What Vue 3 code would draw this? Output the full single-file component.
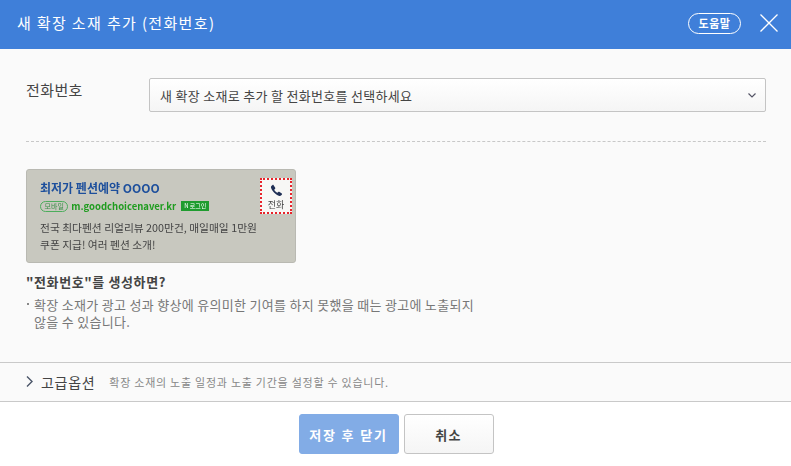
<script setup>
const title = '새 확장 소재 추가 (전화번호)'
</script>

<template>
  <div class="modal">
    <header class="head">
      <h1 class="title">{{ title }}</h1>
      <span class="help">도움말</span>
      <svg class="close" width="18" height="18" viewBox="0 0 18 18"><path d="M0.5 0.5L17.5 17.5M17.5 0.5L0.5 17.500" stroke="#fff" stroke-width="1.3" fill="none"/></svg>
    </header>
    <main class="body">
      <div class="row">
        <label class="label">전화번호</label>
        <div class="select">
          <span>새 확장 소재로 추가 할 전화번호를 선택하세요</span>
          <svg width="8" height="5" viewBox="0 0 8 5"><path d="M0.5 0.5L4 4L7.5 0.5" stroke="#556" stroke-width="1.2" fill="none"/></svg>
        </div>
      </div>
      <div class="dash"></div>
      <div class="ad">
        <div class="ad-main">
          <div class="ad-title">최저가 펜션예약 OOOO</div>
          <div class="ad-url">
            <span class="pill">모바일</span>
            <span class="url">m.goodchoicenaver.kr</span>
            <span class="login">N 로그인</span>
          </div>
          <div class="ad-desc">전국 최다펜션 리얼리뷰 200만건, 매일매일 1만원<br>쿠폰 지급! 여러 펜션 소개!</div>
        </div>
        <div class="call">
          <svg width="13" height="13" viewBox="0 0 24 24"><path fill="#1f2f55" d="M6.6 2.2l3 4.8c.4.6.3 1.300-.2 1.800L7.800 10.400c1 2.300 3.500 4.800 5.800 5.800l1.600-1.600c.5-.5 1.200-.6 1.800-.2l4.800 3c.7.400.8 1.300.3 1.900l-1.800 2.100c-.7.800-1.800 1.100-2.800.8C10.700 20.200 3.800 13.300 1.800 6.500c-.3-1 0-2.100.8-2.800l2.100-1.800c.6-.5 1.500-.4 1.900.3z"/></svg>
          <span>전화</span>
        </div>
      </div>
      <h2 class="q">"전화번호"를 생성하면?</h2>
      <ul class="notes">
        <li>확장 소재가 광고 성과 향상에 유의미한 기여를 하지 못했을 때는 광고에 노출되지 않을 수 있습니다.</li>
      </ul>
    </main>
    <section class="adv">
      <svg width="7" height="11" viewBox="0 0 7 11"><path d="M1 0.5L6 5.500L1 10.500" stroke="#4a5568" stroke-width="1.4" fill="none"/></svg>
      <span class="adv-label">고급옵션</span>
      <span class="adv-text">확장 소재의 노출 일정과 노출 기간을 설정할 수 있습니다.</span>
    </section>
    <footer class="foot">
      <button class="btn primary">저장 후 닫기</button>
      <button class="btn">취소</button>
    </footer>
  </div>
</template>

<style>
html, body { margin: 0; background: #fff; }
</style>

<style scoped>
.modal {
  width: 791px;
  height: 466px;
  overflow: hidden;
  display: flex;
  flex-direction: column;
  font-family: "Noto Sans CJK KR", "Noto Sans", sans-serif;
  color: #444;
  background: #fff;
}
.head {
  height: 49px;
  flex: none;
  box-sizing: border-box;
  background: #3f7fd9;
  display: flex;
  align-items: center;
  padding: 0 13px 3px 17px;
  color: #fff;
}
.title {
  margin: 0;
  flex: 1;
  font-size: 15px;
  font-weight: 400;
  letter-spacing: 1.35px;
  line-height: 24px;
}
.help {
  width: 53px;
  height: 21px;
  box-sizing: border-box;
  border: 1px solid #fff;
  border-radius: 11px;
  font-size: 11px;
  font-weight: 700;
  letter-spacing: 0.5px;
  line-height: 18px;
  text-align: center;
  margin-right: 19px;
}
.close { display: block; }
.body {
  flex: 1;
  background: #fafafa;
  padding: 29px 25px 0 26px;
}
.row { display: flex; }
.label {
  width: 123px;
  flex: none;
  margin-top: 1px;
  font-size: 15px;
  letter-spacing: 0.4px;
  line-height: 22px;
  color: #444;
}
.select {
  flex: 1;
  height: 34px;
  box-sizing: border-box;
  border: 1px solid #c4c4c4;
  border-radius: 2px;
  background: linear-gradient(#fff, #f5f5f5);
  display: flex;
  align-items: center;
  justify-content: space-between;
  padding: 0 9px 0 10px;
  font-size: 13px;
  letter-spacing: 0.3px;
  color: #444;
}
.dash {
  margin-top: 29px;
  border-top: 1px dashed #c8c8c8;
}
.ad {
  margin-top: 27px;
  width: 270px;
  height: 94px;
  box-sizing: border-box;
  background: #c8c8bf;
  border: 1px solid #b9b9b2;
  border-radius: 3px;
  display: flex;
  justify-content: space-between;
  padding: 8px 3px 0 13px;
  filter: blur(0.35px);
}
.ad-title { font-size: 12px; font-weight: 700; color: #1d4f9c; line-height: 20px; }
.ad-url { display: flex; align-items: center; gap: 3px; height: 14px; margin-top: 1px; }
.pill {
  border: 1px solid #4cad5c;
  border-radius: 6px;
  color: #3b8f4a;
  font-size: 7px;
  line-height: 9px;
  padding: 0 3.5px;
}
.url { font-size: 9.5px; font-weight: 700; color: #1f9c1f; }
.login {
  background: #1f9c2f;
  color: #fff;
  font-size: 6px;
  line-height: 10px;
  padding: 0 3px;
  margin-left: 2px;
}
.ad-desc { font-size: 10.75px; line-height: 17px; color: #444; margin-top: 6px; }
.call {
  width: 32px;
  height: 36px;
  box-sizing: border-box;
  border: 2px dotted #e8232a;
  background: #f7f7f5;
  display: flex;
  flex-direction: column;
  align-items: center;
  font-size: 9px;
  line-height: 12px;
  color: #444;
  padding-top: 4px;
  gap: 2px;
}
.q {
  margin: 9px 0 0;
  font-size: 13px;
  font-weight: 700;
  letter-spacing: 0.6px;
  line-height: 20px;
  color: #444;
}
.notes {
  list-style: none;
  margin: 4px 0 0;
  padding: 0 0 0 8px;
  width: 450px;
  position: relative;
  font-size: 13px;
  letter-spacing: 0.3px;
  word-break: keep-all;
  line-height: 17px;
  color: #777;
}
.notes li::before {
  content: "";
  position: absolute;
  left: 1px;
  top: 7px;
  width: 2px;
  height: 2px;
  background: #888;
}
.adv {
  height: 40px;
  flex: none;
  box-sizing: border-box;
  background: #fafafa;
  border-top: 1px solid #c9c9c9;
  border-bottom: 1px solid #c9c9c9;
  display: flex;
  align-items: center;
  padding: 0 0 1px 26px;
}
.adv-label { font-size: 14px; letter-spacing: 0.7px; color: #444; margin-left: 8px; }
.adv-text { font-size: 11px; color: #888; margin-left: 14px; letter-spacing: 0.75px; }
.foot {
  height: 64px;
  flex: none;
  box-sizing: border-box;
  background: #fff;
  display: flex;
  justify-content: center;
  gap: 5px;
  padding: 12px 0 0 1px;
}
.btn {
  width: 90px;
  height: 40px;
  box-sizing: border-box;
  border: 1px solid #c4c4c4;
  border-radius: 3px;
  background: linear-gradient(#fff, #f5f5f5);
  font-family: inherit;
  font-size: 13px;
  font-weight: 700;
  letter-spacing: 1.2px;
  color: #444;
  padding: 0;
}
.btn.primary {
  width: 100px;
  height: 40px;
  background: #82ace6;
  border-color: #82ace6;
  color: #fff;
  letter-spacing: 1.8px;
}
</style>
